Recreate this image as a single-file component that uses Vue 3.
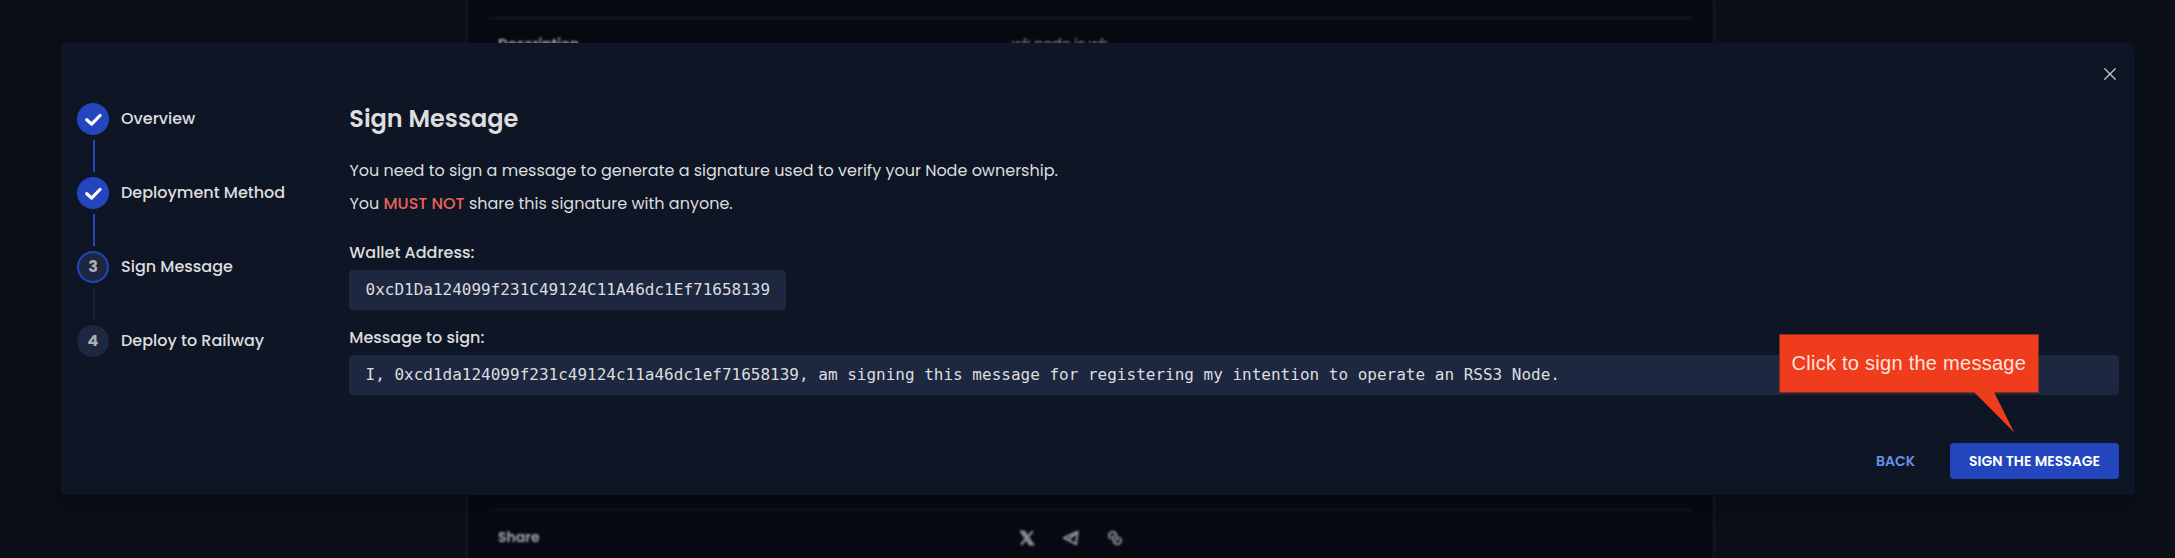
<script setup>
const steps = [
  { label: 'Overview', state: 'done' },
  { label: 'Deployment Method', state: 'done' },
  { label: 'Sign Message', state: 'current' },
  { label: 'Deploy to Railway', state: 'todo' },
]
</script>

<template>
  <div class="page">
    <div class="card">
      <div class="row description">
        <span class="name">Description</span>
        <span class="value">wk node is wk</span>
      </div>
      <div class="row share">
        <span class="name">Share</span>
        <div class="value icons">
          <svg width="16" height="16" viewBox="0 0 16 16" fill="none" stroke="currentColor">
            <path d="M2 1.5h3.2L14 14.5h-3.2z" stroke-width="2" fill="currentColor" fill-opacity=".75" />
            <path d="M13.8 1.2 9 6.6M6.8 9.3 2 14.8" stroke-width="2.2" />
          </svg>
          <svg width="18" height="16" viewBox="0 0 18 16" fill="none" stroke="currentColor" stroke-width="2" stroke-linejoin="round">
            <path d="M15.6 1.6 1.8 8l4 1.9 8.2 4.3zM15.2 2 6.6 9.8" />
          </svg>
          <svg width="16" height="16" viewBox="0 0 16 16" fill="none" stroke="currentColor" stroke-width="2" stroke-linecap="round">
            <path d="M9.4 5.4A3.7 3.7 0 1 0 3.2 8.2M6.4 9.6A3 3 0 0 1 6.7 5.8" />
            <path d="M6.6 10.6A3.7 3.7 0 1 0 12.8 7.8M9.6 6.4a3 3 0 0 1-.3 3.8" />
          </svg>
        </div>
      </div>
    </div>

    <section class="dialog">
      <button class="close" aria-label="Close">
        <svg width="12" height="12" viewBox="0 0 12 12" stroke="currentColor" stroke-width="1.35">
          <path d="M.4.4l11.2 11.2M11.6.4.4 11.6" />
        </svg>
      </button>

      <ol class="steps">
        <li v-for="(step, i) in steps" :key="step.label" class="step" :class="step.state">
          <div class="marker">
            <span class="dot">
              <svg v-if="step.state === 'done'" width="18" height="13" viewBox="0 0 18 13" fill="none" stroke="#fff" stroke-width="3.2" stroke-linecap="round" stroke-linejoin="round">
                <path d="M2.8 6.7 7.6 11.1 16 2.5" />
              </svg>
              <template v-else>{{ i + 1 }}</template>
            </span>
            <span v-if="i < steps.length - 1" class="line"></span>
          </div>
          <span class="label">{{ step.label }}</span>
        </li>
      </ol>

      <div class="content">
        <h2>Sign Message</h2>
        <p>You need to sign a message to generate a signature used to verify your Node ownership.</p>
        <p>You <strong>MUST NOT</strong> share this signature with anyone.</p>

        <div class="field">
          <h3>Wallet Address:</h3>
          <code>0xcD1Da124099f231C49124C11A46dc1Ef71658139</code>
        </div>
        <div class="field">
          <h3>Message to sign:</h3>
          <code class="wide">I, 0xcd1da124099f231c49124c11a46dc1ef71658139, am signing this message for registering my intention to operate an RSS3 Node.</code>
        </div>

        <div class="actions">
          <button class="back">BACK</button>
          <button class="primary">SIGN THE MESSAGE</button>
        </div>
      </div>
    </section>

    <div class="callout">
      Click to sign the message
      <svg class="tail" width="42" height="43" viewBox="0 0 42 43">
        <path d="M0 0h20l20.2 40.5z" fill="#ee3c1c" />
      </svg>
    </div>
  </div>
</template>

<style>
body {
  background: #0b0f18;
}
</style>

<style scoped>
* {
  box-sizing: border-box;
  margin: 0;
  padding: 0;
}
.page {
  position: relative;
  width: 2175px;
  height: 558px;
  overflow: hidden;
  background: #0b0f18;
  color: #dcdddf;
  font-family: Poppins, "Noto Sans", sans-serif;
  font-size: 16px;
  line-height: 24px;
}
.card {
  width: 1249px;
  height: 562px;
  margin-left: 466px;
  padding: 17px 20px 0;
  border: 0 solid #161a25;
  border-width: 0 2px;
  background: #070a12;
  filter: blur(0.85px);
}
.row {
  display: flex;
  align-items: flex-start;
  padding: 14px 10px 0;
  border-top: 2px solid #13171e;
  font-size: 14px;
}
.description {
  height: 492px;
}
.description .name,
.description .value {
  margin-top: -1px;
}
.name {
  width: 514px;
  font-weight: 600;
  color: #adaeb1;
}
.value {
  color: #97989c;
}
.icons {
  display: flex;
  gap: 27px;
  padding: 5px 0 0 7px;
  color: #96979b;
}
.dialog {
  position: absolute;
  left: 61px;
  top: 43px;
  width: 2074px;
  height: 452px;
  display: flex;
  gap: 64px;
  padding: 60px 16px 16px;
  border-radius: 4px;
  background: #0e1524;
  box-shadow: 0 11px 15px -7px rgba(0, 0, 0, 0.15), 0 24px 38px 3px rgba(0, 0, 0, 0.1);
}
button {
  border: 0;
  font: inherit;
  background: none;
}
.close {
  position: absolute;
  right: 19px;
  top: 25px;
  display: flex;
  color: #c3c5c7;
}
.steps {
  width: 208px;
  list-style: none;
}
.step {
  display: flex;
  gap: 12px;
  height: 74px;
}
.marker {
  display: flex;
  flex-direction: column;
  align-items: center;
  width: 32px;
}
.dot {
  display: flex;
  align-items: center;
  justify-content: center;
  width: 32px;
  height: 32px;
  border-radius: 50%;
  background: #1e2740;
  color: #aeafb1;
  font-weight: 700;
}
.done .dot {
  background: #2346bf;
}
.current .dot {
  border: 2px solid #2346bf;
}
.line {
  width: 2px;
  height: 32px;
  margin: 5px 0 0 2px;
  background: #1b2438;
}
.done .line {
  background: #2346bf;
}
.label {
  line-height: 32px;
  font-weight: 500;
  white-space: nowrap;
}
.content {
  flex: 1;
}
h2 {
  margin-bottom: 24px;
  padding-left: 0.3px;
  font-size: 24px;
  line-height: 32px;
  font-weight: 600;
}
p {
  margin-bottom: 9px;
  padding-left: 0.4px;
}
p + p {
  margin-bottom: 25px;
}
strong {
  font-weight: 500;
  color: #ec6159;
}
.field {
  margin-bottom: 14px;
}
h3 {
  margin-bottom: 5px;
  padding-left: 0.3px;
  font-size: 16px;
  font-weight: 500;
}
code {
  display: block;
  width: fit-content;
  height: 40px;
  padding: 8px 15.5px 8px 16.5px;
  border-radius: 4px;
  background: #1e2740;
  font-family: "DejaVu Sans Mono", monospace;
  font-size: 16px;
}
.field + .field {
  padding-top: 2px;
}
.wide {
  width: 100%;
}
.actions {
  display: flex;
  justify-content: flex-end;
  align-items: center;
  gap: 27px;
  margin-top: 48px;
  font-size: 14px;
  font-weight: 600;
}
.back {
  padding: 6px 8px;
  color: #6691ea;
}
.primary {
  width: 169px;
  height: 36px;
  border-radius: 4px;
  background: #2346bf;
  color: #fff;
}
.callout {
  position: absolute;
  left: 1779px;
  top: 334px;
  width: 260px;
  height: 59px;
  padding-left: 11.5px;
  border: 1px solid #84301f;
  background: #ee3c1c;
  color: #fde3dc;
  font-family: "Liberation Sans", Arial, sans-serif;
  font-size: 20px;
  letter-spacing: 0.27px;
  line-height: 57px;
  white-space: nowrap;
}
.tail {
  position: absolute;
  left: 194px;
  top: 57px;
}
</style>
